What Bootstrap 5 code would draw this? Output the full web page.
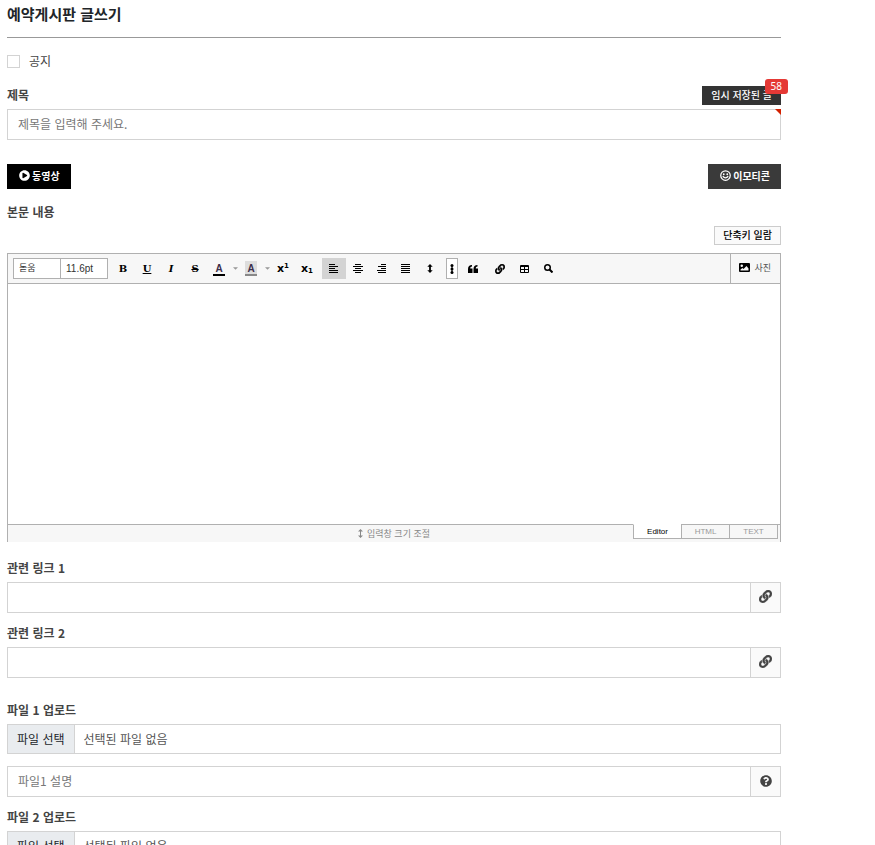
<!DOCTYPE html>
<html lang="ko">
<head>
<meta charset="utf-8">
<meta name="viewport" content="width=device-width, initial-scale=1">
<title>예약게시판 글쓰기</title>
<link href="https://cdn.jsdelivr.net/npm/bootstrap@5.3.0/dist/css/bootstrap.min.css" rel="stylesheet">
<style>
  body { font-family: "Noto Sans CJK KR", sans-serif; font-size: 12px; line-height: 18px; color: #444; background: #fff; }
  svg { fill: currentColor; display: block; flex: none; }
  .write-page { max-width: 788px; padding: 3px 7px 0; }
  .page-title { font-size: 15px; line-height: 22px; font-weight: 700; color: #212529; padding-bottom: 12px; border-bottom: 1px solid #999; margin-bottom: 14px; }
  .notice-row { margin-bottom: 16px; gap: 9px; }
  .notice-row .form-check-input { width: 13px; height: 13px; margin: 3px 0 0; border: 1px solid #d3d3d3; border-radius: 0; }
  .field-label { font-weight: 700; margin-bottom: 5px; display: block; }
  .field-gap { margin-bottom: 11px; }
  .section-gap { margin-bottom: 23px; }
  .media-row { margin-bottom: 14px; }
  .line-input, .icon-cell { min-height: 31px; }
  .line-input, .icon-cell, .file-pick { border: 1px solid #d3d3d3; border-radius: 0; font-size: 12px; line-height: 18px; color: #555; }
  .line-input { padding: 5px 10px 6px; }
  .line-input::placeholder { color: #777; }
  .icon-cell { background: #fafafa; width: 31px; padding: 0 0 2px; justify-content: center; color: #444; }
  .file-pick { cursor: pointer; margin-bottom: 12px; }
  .file-pick span { padding: 5px 9px; }
  .file-pick .pick-button { background: #e9ecef; color: #212529; border-right: 1px solid #d3d3d3; }
  .flat-btn { border: 0; border-radius: 0; color: #fff; font-size: 10px; line-height: 15px; font-weight: 700; padding: 4px 11px 6px 12px; gap: 2px; }
  .flat-btn:hover { color: #fff; }
  .video-btn, .video-btn:hover { background: #000; }
  .emo-btn, .emo-btn:hover { background: #3a3a3a; }
  .saved-btn, .saved-btn:hover { background: #333; padding: 1px 9px 3px; font-weight: 500; }
  .saved-count { position: absolute; top: -7px; right: -7px; background: #e53935; font: 10px/15px "Noto Sans", sans-serif; padding: 0 6px; border-radius: 3px; }
  .required-mark { position: absolute; z-index: 6; top: 0; right: 0; border-top: 6px solid #d32000; border-left: 6px solid transparent; }
  .shortcut-btn { border: 1px solid #ccc; border-radius: 0; background: #fafafa; color: #000; font-size: 10px; line-height: 15px; font-weight: 500; padding: 0 8px 2px; }
  .editor-box { border: 1px solid #b0b0b0; border-bottom: 0; margin-bottom: 17px; }
  .tool-strip { background: #f7f7f7; border-bottom: 1px solid #b0b0b0; padding-left: 5px; min-height: 30px; color: #000; }
  .tool-select { appearance: none; width: 48px; height: 21px; border: 1px solid #b0b0b0; border-radius: 0; background: #fff; font: 9px/15px "Liberation Sans", "Noto Sans CJK KR", sans-serif; color: #333; padding: 0 5px; }
  .tool-select.size-select { margin-left: -1px; font-size: 10px; }
  .tool-group { margin-left: 3px; }
  .tool-btn { width: 24px; height: 21px; border: 0; background: none; padding: 0; color: #000; display: flex; align-items: center; justify-content: center; font: bold 10px/12px "DejaVu Serif", serif; }
  .tool-btn.is-on { background: #d3d3d3; }
  .tool-btn.caret-btn { width: 8px; color: #999; }
  .tool-btn.more-btn { width: 12px; border: 1px solid #b0b0b0; background: #fff; margin: 0 3px 0 4px; }
  .color-a { font: bold 10px/11px "Liberation Sans", sans-serif; color: #3b2e4a; border-bottom: 2px solid #000; padding: 2px 2px 0; height: 15px; }
  .color-a.back-a { border-color: #888; background: #ddd; }
  .tool-btn.sans-x { font: bold 11px/12px "DejaVu Sans", sans-serif; }
  .sans-x sup, .sans-x sub { font-size: 7px; }
  .line-icon { fill: none; stroke: currentColor; }
  .photo-btn { border: 0; border-left: 1px solid #b0b0b0; background: none; font-size: 9px; color: #555; padding: 0 9px 2px 8px; gap: 4px; }
  .photo-btn svg { color: #000; }
  .edit-area { border: 0; border-radius: 0; height: 240px; resize: none; }
  .foot-strip { background: #f7f7f7; border-top: 1px solid #b0b0b0; height: 18px; }
  .resize-btn { border: 0; background: none; font-size: 9px; line-height: 16px; color: #888; padding: 0; gap: 4px; }
  .mode-tab { font: 8px/13px "Liberation Sans", sans-serif; width: 49px; height: 15px; margin-left: -1px; border: 1px solid #b0b0b0; background: #f7f7f7; color: #999; padding: 0; }
  .mode-tab.is-on { background: #fff; color: #000; border-top-color: #fff; }
  .mode-tabs { margin: -1px 2px 0 0; }
</style>
</head>
<body>
<svg class="d-none" aria-hidden="true">
  <symbol id="i-link" viewBox="0 0 512 512"><path d="M326.612 185.391c59.747 59.809 58.927 155.698.36 214.59-.11.12-.24.25-.36.37l-67.2 67.2c-59.27 59.27-155.699 59.262-214.96 0-59.27-59.26-59.27-155.7 0-214.96l37.106-37.106c9.84-9.84 26.786-3.3 27.294 10.606.648 17.722 3.826 35.527 9.69 52.721 1.986 5.822.567 12.262-3.783 16.612l-13.087 13.087c-28.026 28.026-28.905 73.66-1.155 101.96 28.024 28.579 74.086 28.749 102.325.51l67.2-67.19c28.191-28.191 28.073-73.757 0-101.83-3.701-3.694-7.429-6.564-10.341-8.569a16.037 16.037 0 0 1-6.947-12.606c-.396-10.567 3.348-21.456 11.698-29.806l21.054-21.055c5.521-5.521 14.182-6.199 20.584-1.731a152.482 152.482 0 0 1 20.522 17.197zM467.547 44.449c-59.261-59.262-155.69-59.27-214.96 0l-67.2 67.2c-.12.12-.25.25-.36.37-58.566 58.892-59.387 154.781.36 214.59a152.454 152.454 0 0 0 20.521 17.196c6.402 4.468 15.064 3.789 20.584-1.731l21.054-21.055c8.35-8.35 12.094-19.239 11.698-29.806a16.037 16.037 0 0 0-6.947-12.606c-2.912-2.005-6.64-4.875-10.341-8.569-28.073-28.073-28.191-73.639 0-101.83l67.2-67.19c28.239-28.239 74.3-28.069 102.325.51 27.75 28.3 26.872 73.934-1.155 101.96l-13.087 13.087c-4.35 4.35-5.769 10.79-3.783 16.612 5.864 17.194 9.042 34.999 9.69 52.721.509 13.906 17.454 20.446 27.294 10.606l37.106-37.106c59.271-59.259 59.271-155.699.001-214.959z" stroke="currentColor" stroke-width="16"/></symbol>
  <symbol id="i-updown" viewBox="0 0 6 10"><path d="M3 0l3 3H4v4h2L3 10 0 7h2V3H0z"/></symbol>
</svg>
<main class="write-page">
<form>
  <h1 class="page-title">예약게시판 글쓰기</h1>

  <div class="notice-row d-flex">
    <input class="form-check-input" type="checkbox" id="notice">
    <label for="notice">공지</label>
  </div>

  <div class="d-flex justify-content-between align-items-end">
    <label class="field-label" for="subject">제목</label>
    <button type="button" class="btn flat-btn saved-btn position-relative mb-1">임시 저장된 글<span class="saved-count">58</span></button>
  </div>
  <div class="position-relative mb-4">
    <input class="form-control line-input" id="subject" type="text" placeholder="제목을 입력해 주세요.">
    <span class="required-mark"></span>
  </div>

  <div class="media-row d-flex justify-content-between">
    <button type="button" class="btn flat-btn video-btn d-flex align-items-center">
      <svg width="11" height="11" viewBox="0 0 512 512"><path d="M256 8C119 8 8 119 8 256s111 248 248 248 248-111 248-248S393 8 256 8zm115.700 272l-176 101c-15.800 8.800-35.700-2.500-35.700-21V152c0-18.400 19.800-29.800 35.700-21l176 107c16.400 9.200 16.400 32.900 0 42z"/></svg>동영상</button>
    <button type="button" class="btn flat-btn emo-btn d-flex align-items-center">
      <svg width="11" height="11" viewBox="0 0 22 22"><circle cx="11" cy="11" r="9.500" fill="none" stroke="currentColor" stroke-width="2.500"/><circle cx="7.500" cy="8.500" r="1.800"/><circle cx="14.500" cy="8.500" r="1.800"/><path d="M5.500 12.500q5.500 6 11 0" fill="none" stroke="currentColor" stroke-width="2.500"/></svg>이모티콘</button>
  </div>

  <label class="field-label" for="content">본문 내용</label>
  <div class="d-flex justify-content-end mb-2">
    <button type="button" class="btn shortcut-btn">단축키 일람</button>
  </div>

  <div class="editor-box">
    <div class="tool-strip d-flex align-items-stretch">
      <div class="d-flex align-items-center flex-grow-1">
        <select class="tool-select" aria-label="글꼴"><option>돋움</option></select>
        <select class="tool-select size-select" aria-label="글자 크기"><option>11.6pt</option></select>
        <div class="tool-group d-flex">
          <button type="button" class="tool-btn">B</button>
          <button type="button" class="tool-btn"><u>U</u></button>
          <button type="button" class="tool-btn"><i>I</i></button>
          <button type="button" class="tool-btn"><s>S</s></button>
          <button type="button" class="tool-btn" aria-label="글자색"><span class="color-a">A</span></button>
          <button type="button" class="tool-btn caret-btn" aria-label="글자색 선택"><svg width="5" height="3" viewBox="0 0 4 2"><path d="M0 0h4L2 2z"/></svg></button>
          <button type="button" class="tool-btn" aria-label="배경색"><span class="color-a back-a">A</span></button>
          <button type="button" class="tool-btn caret-btn" aria-label="배경색 선택"><svg width="5" height="3" viewBox="0 0 4 2"><path d="M0 0h4L2 2z"/></svg></button>
          <button type="button" class="tool-btn sans-x"><span>x<sup>1</sup></span></button>
          <button type="button" class="tool-btn sans-x"><span>x<sub>1</sub></span></button>
        </div>
        <div class="tool-group d-flex">
          <button type="button" class="tool-btn is-on" aria-label="왼쪽 정렬"><svg width="10" height="9" viewBox="0 0 10 9"><path d="M0 0h6v1H0zM0 2h9v1H0zM0 4h6v1H0zM0 6h9v1H0zM0 8h9v1H0z"/></svg></button>
          <button type="button" class="tool-btn" aria-label="가운데 정렬"><svg width="10" height="9" viewBox="0 0 10 9"><path d="M2 0h6v1H2zM0 2h10v1H0zM2 4h6v1H2zM0 6h10v1H0zM2 8h6v1H2z"/></svg></button>
          <button type="button" class="tool-btn" aria-label="오른쪽 정렬"><svg width="10" height="9" viewBox="0 0 10 9"><path d="M4 0h5v1H4zM1 2h8v1H1zM4 4h5v1H4zM0 6h9v1H0zM1 8h8v1H1z"/></svg></button>
          <button type="button" class="tool-btn" aria-label="양쪽 정렬"><svg width="10" height="9" viewBox="0 0 10 9"><path d="M0 0h9v1H0zM0 2h9v1H0zM0 4h9v1H0zM0 6h9v1H0zM0 8h9v1H0z"/></svg></button>
          <button type="button" class="tool-btn" aria-label="줄 간격"><svg width="6" height="9"><use href="#i-updown"/></svg></button>
        </div>
        <button type="button" class="tool-btn more-btn" aria-label="더 보기"><svg width="4" height="10" viewBox="0 0 4 10"><circle cx="2" cy="1.500" r="1.500"/><circle cx="2" cy="5" r="1.500"/><circle cx="2" cy="8.500" r="1.500"/><path d="M1.500 1h1v8h-1z"/></svg></button>
        <button type="button" class="tool-btn" aria-label="인용"><svg width="10" height="8" viewBox="0 0 20 16"><path d="M8 0v3C5.500 3 4.500 4.500 4.500 7H9v9H0V8c0-5 3-8 8-8zM19 0v3c-2.500 0-3.500 1.500-3.500 4H20v9h-9V8c0-5 3-8 8-8z"/></svg></button>
        <div class="tool-group d-flex">
          <button type="button" class="tool-btn" aria-label="링크"><svg width="10" height="10"><use href="#i-link"/></svg></button>
          <button type="button" class="tool-btn" aria-label="표"><svg width="9" height="8" viewBox="0 0 9 8"><path fill-rule="evenodd" d="M1 0h7q1 0 1 1v6q0 1-1 1H1Q0 8 0 7V1q0-1 1-1zM1 2v2h3V2zM5 2v2h3V2zM1 5v2h3V5zM5 5v2h3V5z"/></svg></button>
          <button type="button" class="tool-btn" aria-label="찾기"><svg class="line-icon" width="9" height="9" viewBox="0 0 18 18"><circle cx="7" cy="7" r="5.500" stroke-width="3"/><path d="M11 11l6 6" stroke-width="4"/></svg></button>
        </div>
      </div>
      <button type="button" class="photo-btn d-flex align-items-center">
        <svg width="11" height="9" viewBox="0 0 22 18"><path fill-rule="evenodd" d="M2 0h18q2 0 2 2v14q0 2-2 2H2q-2 0-2-2V2q0-2 2-2zM5.500 3a2.500 2.500 0 1 0 0 5 2.500 2.500 0 0 0 0-5zM3 15h16v-4l-4-5-6 6-2-2-4 3z"/></svg>사진</button>
    </div>
    <textarea class="form-control edit-area" id="content"></textarea>
    <div class="foot-strip row g-0">
      <div class="col"></div>
      <button type="button" class="resize-btn col-auto d-flex align-items-center"><svg width="5" height="9" viewBox="0 0 5 9"><path d="M0 2.500L2.500 0 5 2.500H3v4h2L2.500 9 0 6.500h2v-4z"/></svg>입력창 크기 조절</button>
      <div class="col d-flex justify-content-end">
        <div class="mode-tabs d-flex">
          <button type="button" class="mode-tab is-on">Editor</button>
          <button type="button" class="mode-tab">HTML</button>
          <button type="button" class="mode-tab">TEXT</button>
        </div>
      </div>
    </div>
  </div>

  <label class="field-label" for="link1">관련 링크 1</label>
  <div class="input-group field-gap">
    <input class="form-control line-input" id="link1" type="text">
    <span class="input-group-text icon-cell"><svg width="13" height="13"><use href="#i-link"/></svg></span>
  </div>
  <label class="field-label" for="link2">관련 링크 2</label>
  <div class="input-group section-gap">
    <input class="form-control line-input" id="link2" type="text">
    <span class="input-group-text icon-cell"><svg width="13" height="13"><use href="#i-link"/></svg></span>
  </div>

  <label class="field-label" for="file1">파일 1 업로드</label>
  <input class="visually-hidden" type="file" id="file1">
  <label class="file-pick d-flex" for="file1"><span class="pick-button">파일 선택</span><span>선택된 파일 없음</span></label>
  <div class="input-group field-gap">
    <input class="form-control line-input" type="text" placeholder="파일1 설명" aria-label="파일1 설명">
    <span class="input-group-text icon-cell"><svg width="12" height="12" viewBox="0 0 512 512"><path d="M504 256c0 136.997-111.043 248-248 248S8 392.997 8 256C8 119.083 119.043 8 256 8s248 111.083 248 248zM262.655 90c-54.497 0-89.255 22.957-116.549 63.758-3.536 5.286-2.353 12.415 2.715 16.258l34.699 26.310c5.205 3.947 12.621 3.008 16.665-2.122 17.864-22.658 30.113-35.797 57.303-35.797 20.429 0 45.698 13.148 45.698 32.958 0 14.976-12.363 22.667-32.534 33.976C247.128 238.528 216 254.941 216 296v4c0 6.627 5.373 12 12 12h56c6.627 0 12-5.373 12-12v-1.333c0-28.462 83.186-29.647 83.186-106.667 0-58.002-60.165-102-116.531-102zM256 338c-25.365 0-46 20.635-46 46 0 25.364 20.635 46 46 46s46-20.636 46-46c0-25.365-20.635-46-46-46z"/></svg></span>
  </div>
  <label class="field-label" for="file2">파일 2 업로드</label>
  <input class="visually-hidden" type="file" id="file2">
  <label class="file-pick d-flex" for="file2"><span class="pick-button">파일 선택</span><span>선택된 파일 없음</span></label>
</form>
</main>
<script src="https://cdn.jsdelivr.net/npm/bootstrap@5.3.0/dist/js/bootstrap.bundle.min.js"></script>
</body>
</html>
